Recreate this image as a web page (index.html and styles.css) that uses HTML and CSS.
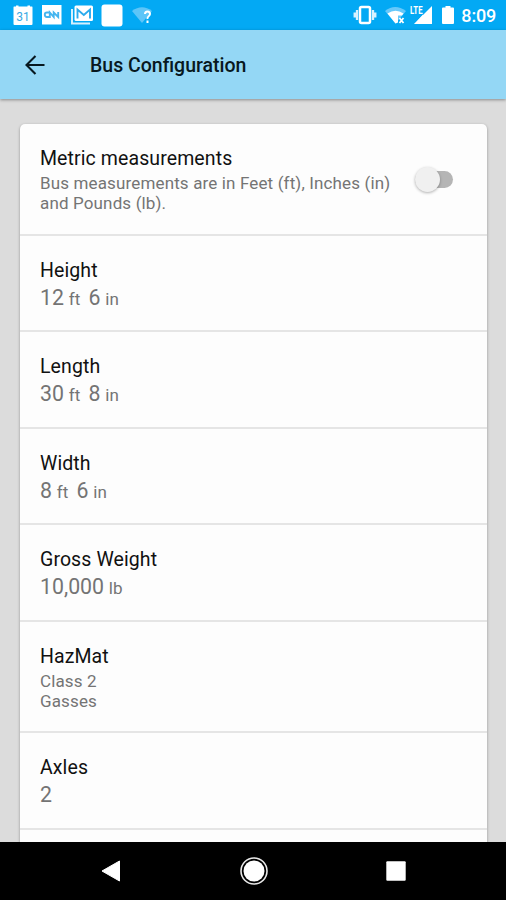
FILE: index.html
```html
<!DOCTYPE html>
<html lang="en">
<head>
<meta charset="utf-8">
<title>Bus Configuration</title>
<link rel="stylesheet" href="styles.css">
</head>
<body>
<div class="screen">
  <div class="status">
    <div class="notifications">
      <svg width="20" height="22" viewBox="0 0 20 22"><path d="M1 2.500h2V1.500h2.500v1h9v-1H17v1h2q.5 0 .5 1V20q0 1-1 1h-17q-1 0-1-1V3.500q0-1 .5-1z" fill="#fff"/><text x="10" y="16.500" class="day">31</text></svg>
      <svg width="20" height="22" viewBox="0 0 20 22"><path d="M0 1h19.500v19.500H0z" fill="#fff"/><path d="M7.500 8.500H5q-2.200 0-2.200 2.200T5 13h2.800V8.500l3.900 4.500V8.500l4.500 4.500V8" fill="none" stroke="#45b5ef" stroke-width="1.900"/></svg>
      <svg width="23" height="22" viewBox="0 0 23 22"><path d="M1 5v14.500H19" fill="none" stroke="#d5f0fe" stroke-width="2"/><rect x="3.500" y="1.500" width="18.500" height="15.500" rx="1.500" fill="#fff"/><path d="M6.500 14.500V5.500l6.300 5.500L19 5.500v9" fill="none" stroke="#2aabed" stroke-width="1.900"/></svg>
      <svg width="22" height="23" viewBox="0 0 22 23"><rect x=".5" y=".5" width="21" height="22" rx="3" fill="#fff"/></svg>
      <svg width="22" height="22" viewBox="0 0 22 22"><path d="M0 7Q10-.5 20 7L10 19z" fill="#5dc5f8"/><path d="M13 10q0-2.500 2.500-2.500T18 10q0 1.200-1.400 2.200T15.500 15m0 1.500V19" fill="none" stroke="#fff" stroke-width="2"/></svg>
    </div>
    <div class="system">
      <svg width="24" height="20" viewBox="0 0 24 20"><rect x="7" y="2" width="10" height="16" rx="1.500" fill="none" stroke="#fff" stroke-width="2.500"/><path d="M4 5v10M20 5v10M1.700 7.500v5M22.300 7.500v5" stroke="#d9f2ff" stroke-width="2.300"/></svg>
      <svg width="22" height="20" viewBox="0 0 22 20"><path d="M0 6Q10-2 21 6L10.500 18.500z" fill="#66c8fa"/><path d="M2.500 8.500Q10.500 3 18.500 8.500L17 10.500h-4v7l-2.500 1z" fill="#fff"/><path d="M14.500 13l4 5m0-5l-4 5" stroke="#fff" stroke-width="1.800"/></svg>
      <svg class="signal" width="24" height="24" viewBox="0 -4 24 24"><path d="M23 1v18H5z" fill="#fff"/><path d="M0 0h13.500v9.500H0z" fill="#03a9f4"/><path d="M14 9.500L5.500 19H14z" fill="#fff"/><text x="1" y="9" class="lte" textLength="12.500" lengthAdjust="spacingAndGlyphs">LTE</text></svg>
      <svg width="12" height="20" viewBox="0 0 12 20"><path d="M1 2.500h2.500V1h5v1.500H11q1 0 1 1V18q0 1-1 1H1q-1 0-1-1V3.500q0-1 1-1z" fill="#fff"/></svg>
      <span class="clock">8:09</span>
    </div>
  </div>
  <header class="appbar">
    <svg width="20" height="20" viewBox="0 0 20 20"><path d="M19.500 10H1.500M10.500 1L1.500 10l9 9" fill="none" stroke="#071820" stroke-width="2.100"/></svg>
    <h1>Bus Configuration</h1>
  </header>
  <main class="content">
    <div class="card">
      <section class="row tall">
        <div class="text"><h2>Metric measurements</h2><p class="sub">Bus measurements are in Feet (ft), Inches (in)<br>and Pounds (lb).</p></div>
        <div class="switch"><span class="thumb"></span></div>
      </section>
      <section class="row"><div class="text"><h2>Height</h2><p class="value">12 <small>ft</small> <b>6</b> <small>in</small></p></div></section>
      <section class="row"><div class="text"><h2>Length</h2><p class="value">30 <small>ft</small> <b>8</b> <small>in</small></p></div></section>
      <section class="row"><div class="text"><h2>Width</h2><p class="value">8 <small>ft</small> <b>6</b> <small>in</small></p></div></section>
      <section class="row"><div class="text"><h2>Gross Weight</h2><p class="value">10,000 <small>lb</small></p></div></section>
      <section class="row tall"><div class="text"><h2>HazMat</h2><p class="sub">Class 2<br>Gasses</p></div></section>
      <section class="row"><div class="text"><h2>Axles</h2><p class="value">2</p></div></section>
      <section class="row"></section>
    </div>
  </main>
  <nav class="nav">
    <svg width="20" height="22" viewBox="0 0 20 22"><path d="M18.500 1v20L1 11z" fill="#fff" stroke="#fff" stroke-linejoin="round"/></svg>
    <svg width="30" height="30" viewBox="0 0 30 30"><circle cx="15" cy="15" r="13" fill="none" stroke="#e8e8e8" stroke-width="1.600"/><circle cx="15" cy="15" r="10.500" fill="#fff"/></svg>
    <svg width="20" height="20" viewBox="0 0 20 20"><rect x=".3" y=".3" width="19.400" height="19.400" rx="1" fill="#fff"/></svg>
  </nav>
</div>
</body>
</html>
```
FILE: styles.css
```css
* { box-sizing: border-box; }
body { margin: 0; font-family: Roboto, "Liberation Sans", sans-serif; }
svg { display: block; flex: none; }
h1, h2, p { margin: 0; font-weight: 400; }
.screen { width: 506px; height: 900px; display: flex; flex-direction: column; overflow: hidden; background: #dcdcdc; }
.status { height: 30px; flex: none; display: flex; justify-content: space-between; background: #03a9f4; padding: 0 10px 0 13px; }
.notifications { display: flex; gap: 9px; padding-top: 4px; }
.notifications svg:nth-child(4) { margin-left: -2px; }
.day { font-size: 12px; fill: #38a9e4; text-anchor: middle; }
.system { display: flex; align-items: center; gap: 7px; }
.system svg:nth-child(2) { margin-left: 1px; }
.system svg:nth-child(4) { margin-left: 2px; }
.system .signal { margin: -4px 0 0 -5px; }
.lte { font-size: 11px; font-weight: 700; fill: #fff; }
.clock { font-size: 18px; font-weight: 500; line-height: 30px; color: #fff; margin: 2px 0 0; letter-spacing: -.2px; }
.appbar { height: 69px; flex: none; display: flex; align-items: center; gap: 45px; padding-left: 25px; background: #94d7f5; box-shadow: 0 1px 3px rgba(0,0,0,.38); z-index: 1; }
.appbar h1 { font-size: 19.500px; font-weight: 500; line-height: 26px; color: #071820; padding-top: 2px; }
.content { flex: 1; min-height: 0; overflow: hidden; padding: 25px 19px 0 20px; }
.card { background: #fdfdfd; border-radius: 5px; box-shadow: 0 1px 3px rgba(0,0,0,.35); }
.row { height: 96.500px; border-bottom: 2px solid #e5e5e5; padding: 23px 34px 0 20px; display: flex; justify-content: space-between; }
.tall { height: 111.700px; }
h2 { font-size: 19.500px; line-height: 24px; color: #111; letter-spacing: .1px; }
.sub { font-size: 17px; line-height: 20.300px; color: #747474; margin-top: 2px; white-space: nowrap; letter-spacing: .14px; }
.value { font-size: 21.300px; line-height: 28px; color: #747474; margin-top: 1px; }
.value small { font-size: 17px; margin-left: -.5px; }
.value b { font-weight: 400; margin-left: 3px; }
.switch { width: 38px; height: 17px; flex: none; border-radius: 9px; background: #b5b5b5; margin-top: 24px; display: flex; align-items: center; }
.thumb { width: 25px; height: 25px; flex: none; border-radius: 50%; background: #f0f0f0; box-shadow: 0 1px 3px rgba(0,0,0,.3); }
.nav { height: 58px; flex: none; display: flex; align-items: center; justify-content: space-between; background: #000; padding: 0 100px 0 101px; z-index: 1; }
```
